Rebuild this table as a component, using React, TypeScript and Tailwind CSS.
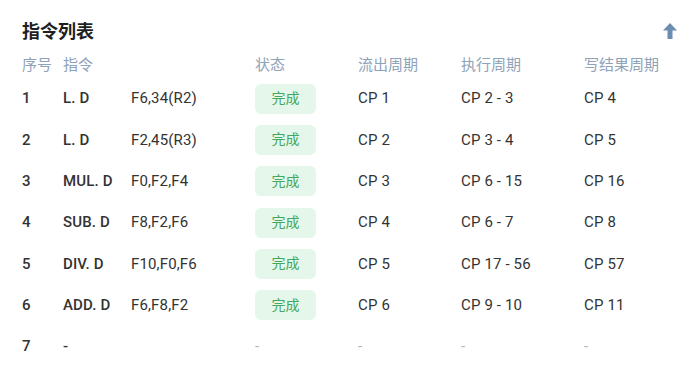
import React from 'react'

type Row = {
  id: number
  op: string
  args: string
  done: boolean
  issue: string
  exec: string
  write: string
}

const rows: Row[] = [
  { id: 1, op: 'L. D', args: 'F6,34(R2)', done: true, issue: 'CP 1', exec: 'CP 2 - 3', write: 'CP 4' },
  { id: 2, op: 'L. D', args: 'F2,45(R3)', done: true, issue: 'CP 2', exec: 'CP 3 - 4', write: 'CP 5' },
  { id: 3, op: 'MUL. D', args: 'F0,F2,F4', done: true, issue: 'CP 3', exec: 'CP 6 - 15', write: 'CP 16' },
  { id: 4, op: 'SUB. D', args: 'F8,F2,F6', done: true, issue: 'CP 4', exec: 'CP 6 - 7', write: 'CP 8' },
  { id: 5, op: 'DIV. D', args: 'F10,F0,F6', done: true, issue: 'CP 5', exec: 'CP 17 - 56', write: 'CP 57' },
  { id: 6, op: 'ADD. D', args: 'F6,F8,F2', done: true, issue: 'CP 6', exec: 'CP 9 - 10', write: 'CP 11' },
  { id: 7, op: '-', args: '', done: false, issue: '-', exec: '-', write: '-' },
]

const cols = 'grid grid-cols-[41px_68px_124px_103px_103px_123px_1fr] items-center'

function ArrowUp() {
  return (
    <svg width="14" height="16" viewBox="0 0 14 16" className="text-[#6b8db0]">
      <polygon points="7,0 14,7.5 0,7.5" fill="currentColor" />
      <rect x="4.5" y="7" width="5" height="9" rx="0.5" fill="currentColor" />
    </svg>
  )
}

export default function App() {
  return (
    <div
      className="w-[693px] h-[369px] bg-white px-[22px] pt-[18px] overflow-hidden"
      style={{ fontFamily: 'Roboto, "Noto Sans CJK SC", sans-serif' }}
    >
      {/* Title */}
      <div className="flex items-center justify-between h-[26px]">
        <h2 className="text-[18px] font-bold text-[#1f1f1f]">指令列表</h2>
        <div className="mr-[-6px]">
          <ArrowUp />
        </div>
      </div>

      {/* Header */}
      <div className={`${cols} mt-2 h-[26px] text-[15px] text-[#8ea2b8]`}>
        <span>序号</span>
        <span>指令</span>
        <span />
        <span>状态</span>
        <span>流出周期</span>
        <span>执行周期</span>
        <span>写结果周期</span>
      </div>

      {/* Rows */}
      {rows.map(r => (
        <div key={r.id} className={`${cols} h-[41.3px] text-[15px] tracking-[0.15px] text-[#333]`}>
          <span className="font-medium">{r.id}</span>
          <span className="font-medium">{r.op}</span>
          <span>{r.args}</span>
          <span>
            {r.done ? (
              <span className="inline-flex items-center justify-center w-[61px] h-[30px] rounded-md bg-[#e5f7ea] text-[#43a85e] text-[14px] tracking-normal">
                完成
              </span>
            ) : (
              <span className="text-[#b5b5b5]">-</span>
            )}
          </span>
          <span className={r.done ? '' : 'text-[#b5b5b5]'}>{r.issue}</span>
          <span className={r.done ? '' : 'text-[#b5b5b5]'}>{r.exec}</span>
          <span className={r.done ? '' : 'text-[#b5b5b5]'}>{r.write}</span>
        </div>
      ))}
    </div>
  )
}
